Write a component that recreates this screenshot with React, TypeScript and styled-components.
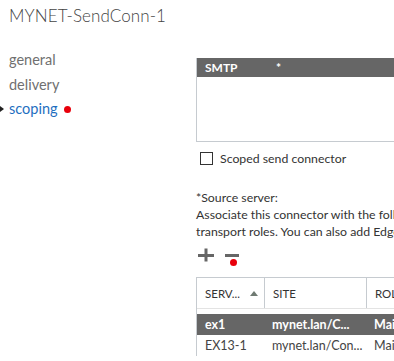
import styled, { createGlobalStyle } from "styled-components";

const GlobalStyle = createGlobalStyle`
  html, body {
    margin: 0;
    padding: 0;
    background: #fff;
    overflow: hidden;
  }
  body {
    font-family: Lato, "Open Sans", "Liberation Sans", sans-serif;
    color: #333;
  }
`;

const Page = styled.div`
  width: 394px;
  height: 361px;
  overflow: hidden;
`;

const Title = styled.h1`
  margin: 0;
  padding: 6px 0 0 9px;
  height: 24px;
  font-size: 17px;
  font-weight: 300;
  line-height: 20px;
  color: #444;
  letter-spacing: 0.1px;
`;

const Body = styled.div`
  display: flex;
  margin-top: 18px;
`;

const Nav = styled.ul`
  list-style: none;
  margin: 0;
  padding: 0;
  width: 196px;
  flex: none;
`;

const NavItem = styled.li<{ $active?: boolean }>`
  position: relative;
  padding-left: 9px;
  height: 24.5px;
  font-size: 14.5px;
  line-height: 24px;
  color: ${(p) => (p.$active ? "#1f6fbf" : "#707070")};
  display: flex;
  align-items: center;
  gap: 6px;
`;

const Pointer = styled.span`
  position: absolute;
  left: 0;
  top: 9px;
  width: 0;
  height: 0;
  border-top: 3.5px solid transparent;
  border-bottom: 3.5px solid transparent;
  border-left: 4px solid #222;
`;

const Dot = styled.span`
  display: inline-block;
  width: 7px;
  height: 7px;
  border-radius: 50%;
  background: #e8000b;
  flex: none;
`;

const Main = styled.div`
  width: 300px;
  flex: none;
  padding-top: 10px;
  font-size: 12.3px;
`;

const SmtpBox = styled.div`
  height: 83px;
  border: 1px solid #c6cbd0;
  border-top: none;
`;

const SmtpHead = styled.div`
  display: grid;
  grid-template-columns: 71px 1fr;
  height: 19px;
  background: #666;
  color: #fff;
  font-weight: 700;
  font-size: 12px;
  line-height: 19px;
  padding-left: 8px;
`;

const CheckRow = styled.label`
  display: flex;
  align-items: center;
  gap: 7px;
  margin: 9px 0 0 4px;
  height: 14px;
  font-size: 12.3px;
  color: #333;
`;

const Box = styled.span`
  width: 11px;
  height: 11px;
  border: 1px solid #333;
  flex: none;
`;

const Label = styled.div`
  margin-top: 24px;
  line-height: 17px;
  white-space: nowrap;
`;

const Para = styled.p`
  margin: 0;
  line-height: 17px;
  white-space: nowrap;
`;

const Tools = styled.div`
  display: flex;
  gap: 10px;
  margin: 8px 0 0 2px;
  height: 29px;
`;

const ToolBtn = styled.span`
  position: relative;
  width: 16px;
  height: 16px;
`;

const ToolDot = styled(Dot)`
  position: absolute;
  left: 6px;
  top: 11px;
`;

const Grid = styled.div`
  border: 1px solid #c6cbd0;
  border-bottom: none;
  width: 260px;
`;

const GridHead = styled.div`
  display: grid;
  grid-template-columns: 67px 102px 1fr;
  height: 30px;
  border-bottom: 1px solid #e3e3e3;
`;

const HeadCell = styled.div`
  display: flex;
  align-items: center;
  justify-content: space-between;
  padding: 0 6px 0 8px;
  font-size: 11.5px;
  color: #333;
  border-left: 1px solid #c6cbd0;
  &:first-child {
    border-left: none;
  }
`;

const SortArrow = styled.span`
  width: 0;
  height: 0;
  border-left: 4px solid transparent;
  border-right: 4px solid transparent;
  border-bottom: 5px solid #6f7a72;
`;

const Rows = styled.div`
  padding-top: 5px;
`;

const Row = styled.div<{ $selected?: boolean }>`
  display: grid;
  grid-template-columns: 67px 102px 1fr;
  height: 21px;
  line-height: 21px;
  font-size: 12.5px;
  background: ${(p) => (p.$selected ? "#666" : "transparent")};
  color: ${(p) => (p.$selected ? "#fff" : "#444")};
  font-weight: ${(p) => (p.$selected ? 700 : 400)};
`;

const Cell = styled.div`
  padding-left: 8px;
  white-space: nowrap;
  overflow: hidden;
`;

function PlusIcon() {
  return (
    <svg width="16" height="16" viewBox="0 0 16 16">
      <path d="M0 7.5h16M8 0.5v13" stroke="#666" strokeWidth="3" />
    </svg>
  );
}

function MinusIcon() {
  return (
    <svg width="16" height="16" viewBox="0 0 16 16">
      <path d="M1 7.5h14" stroke="#666" strokeWidth="3" />
    </svg>
  );
}

export default function App() {
  return (
    <Page>
      <GlobalStyle />
      <Title>MYNET-SendConn-1</Title>
      <Body>
        <Nav>
          <NavItem>general</NavItem>
          <NavItem>delivery</NavItem>
          <NavItem $active>
            <Pointer />
            scoping
            <Dot />
          </NavItem>
        </Nav>
        <Main>
          <SmtpBox>
            <SmtpHead>
              <span>SMTP</span>
              <span>*</span>
            </SmtpHead>
          </SmtpBox>
          <CheckRow>
            <Box />
            Scoped send connector
          </CheckRow>
          <Label>*Source server:</Label>
          <Para>
            Associate this connector with the following servers containing
            <br />
            transport roles. You can also add Edge Subscriptions.
          </Para>
          <Tools>
            <ToolBtn>
              <PlusIcon />
            </ToolBtn>
            <ToolBtn>
              <MinusIcon />
              <ToolDot />
            </ToolBtn>
          </Tools>
          <Grid>
            <GridHead>
              <HeadCell>
                SERV...
                <SortArrow />
              </HeadCell>
              <HeadCell>SITE</HeadCell>
              <HeadCell>ROLE</HeadCell>
            </GridHead>
            <Rows>
              <Row $selected>
                <Cell>ex1</Cell>
                <Cell>mynet.lan/C...</Cell>
                <Cell>Mailbox</Cell>
              </Row>
              <Row>
                <Cell>EX13-1</Cell>
                <Cell>mynet.lan/Con...</Cell>
                <Cell>Mailbox</Cell>
              </Row>
            </Rows>
          </Grid>
        </Main>
      </Body>
    </Page>
  );
}
